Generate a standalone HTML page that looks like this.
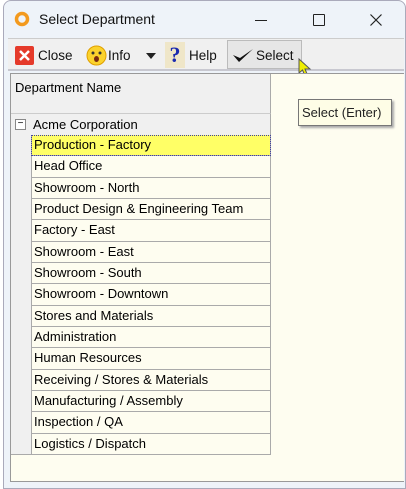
<!DOCTYPE html>
<html><head><meta charset="utf-8"><style>
*{box-sizing:border-box;margin:0;padding:0}
body{width:406px;height:489px;background:#fff;font-family:"Liberation Sans",sans-serif;position:relative;overflow:hidden}
.win{position:absolute;left:3px;top:0;width:403px;height:489px;background:#eef3f9;border:1px solid #aab;border-radius:8px 8px 0 0}
.title{position:absolute;left:35px;top:10px;font-size:14px;color:#111}
.tb{position:absolute;left:8px;top:38px;width:396px;height:33px;background:#f0f0f0;border-top:1px solid #ccc;border-bottom:2px solid #c8c8d0}
.btn{position:absolute;top:9px;font-size:13.5px;color:#111}
.main{position:absolute;left:10px;top:73px;width:394px;height:409px;background:#fefdf0;border:1px solid #999;border-right:none}
.hdr{position:absolute;left:0;top:0;width:260px;height:40px;background:#f0f0f0;border-right:1px solid #aaa;border-bottom:1px solid #ccc;font-size:13px;padding:6px 4px}
.strip{position:absolute;left:0;top:40px;width:20px;height:341px;background:#f0f0f0;border-bottom:1px solid #aaa}
.acme{position:absolute;left:0;top:40px;width:260px;height:21px;background:#f0f0f0;border-right:1px solid #aaa;font-size:13px;padding:3px 0 0 22px}
.rows{position:absolute;left:20px;top:61px;width:240px}
.r{height:21.33px;border:1px solid #aaa;border-top:none;font-size:13px;padding:2px 2px;white-space:nowrap;background:#fefdf0}
.r.sel{background:#ffff66;outline:1px dotted #4040a0;outline-offset:-1px}
.tip{position:absolute;left:298px;top:99px;width:94px;height:27px;background:#fefde6;border:1px solid #777;box-shadow:2px 2px 2px #aaa;font-size:13px;color:#222;padding:5px 3px}
</style></head><body>
<div class="win">
<svg style="position:absolute;left:9px;top:9px" width="18" height="18" viewBox="0 0 18 18"><circle cx="9" cy="9" r="5.5" fill="none" stroke="#f39a1e" stroke-width="3.5"/></svg>
<div class="title">Select Department</div>
<div style="position:absolute;left:251px;top:19px;width:12px;height:1px;background:#222"></div>
<div style="position:absolute;left:309px;top:13px;width:12px;height:12px;border:1px solid #222;border-radius:1px"></div>
<svg style="position:absolute;left:366px;top:13px" width="12" height="12"><path d="M0.5 0.5L11.5 11.5M11.5 0.5L0.5 11.5" stroke="#222" stroke-width="1.2"/></svg>
</div>
<div class="tb">
<div style="position:absolute;left:219px;top:1px;width:75px;height:29px;background:#e6e6e6;border:1px solid #bbb"></div>
<svg style="position:absolute;left:7px;top:7px" width="19" height="19"><rect width="19" height="19" rx="2" fill="#e53a2a"/><path d="M5 5L14 14M14 5L5 14" stroke="#fff" stroke-width="2.5"/></svg>
<div class="btn" style="left:30px">Close</div>
<svg style="position:absolute;left:78px;top:6px" width="21" height="21"><circle cx="10.5" cy="10.5" r="9.5" fill="#fbd22c" stroke="#e0a000"/><circle cx="7" cy="8" r="1.5" fill="#333"/><circle cx="14" cy="8" r="1.5" fill="#333"/><ellipse cx="10.5" cy="14" rx="2.5" ry="3" fill="#7a2a10"/></svg>
<div class="btn" style="left:100px">Info</div>
<div style="position:absolute;left:138px;top:14px;border:5px solid transparent;border-top:6px solid #222"></div>
<div style="position:absolute;left:157px;top:3px;width:20px;height:26px;background:#efe6c8;font:bold 22px 'Liberation Serif',serif;color:#1a2ab0;text-align:center">?</div>
<div class="btn" style="left:181px">Help</div>
<svg style="position:absolute;left:224px;top:8px" width="22" height="18"><path d="M1 8L7 15L21 2L8 11Z" fill="#111"/></svg>
<div class="btn" style="left:248px">Select</div>
</div>
<svg style="position:absolute;left:298px;top:58px" width="14" height="20"><path d="M1 1L1 15L4.5 12L7 18L9.5 17L7 11L12 11Z" fill="#ee0" stroke="#555" stroke-width="1"/></svg>
<div class="main">
<div class="hdr">Department Name</div>
<div class="strip"></div>
<div class="acme">Acme Corporation</div>
<div style="position:absolute;left:4px;top:45px;width:11px;height:11px;border:1px solid #888;background:#fff;font-size:10px;line-height:8px;text-align:center">−</div>
<div class="rows">
<div class="r sel">Production - Factory</div>
<div class="r">Head Office</div>
<div class="r">Showroom - North</div>
<div class="r">Product Design &amp; Engineering Team</div>
<div class="r">Factory - East</div>
<div class="r">Showroom - East</div>
<div class="r">Showroom - South</div>
<div class="r">Showroom - Downtown</div>
<div class="r">Stores and Materials</div>
<div class="r">Administration</div>
<div class="r">Human Resources</div>
<div class="r">Receiving / Stores &amp; Materials</div>
<div class="r">Manufacturing / Assembly</div>
<div class="r">Inspection / QA</div>
<div class="r">Logistics / Dispatch</div>
</div>
</div>
<div class="tip">Select (Enter)</div>
</body></html>
